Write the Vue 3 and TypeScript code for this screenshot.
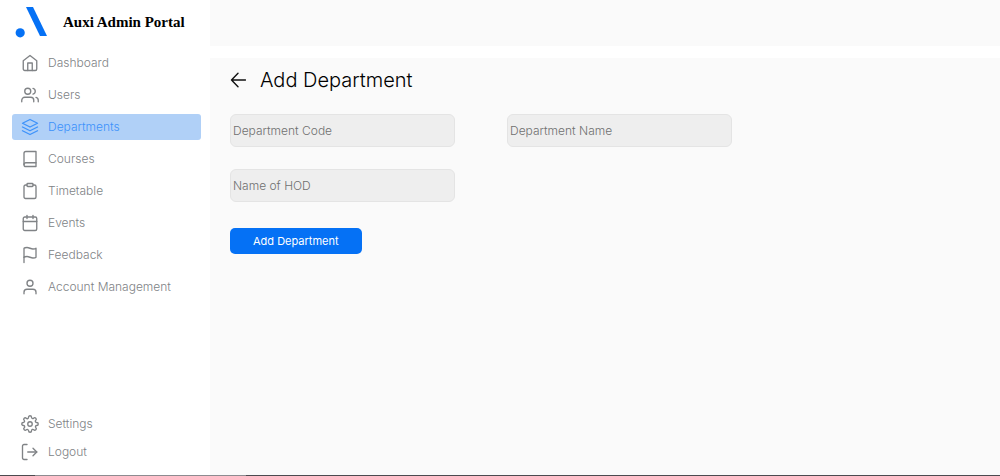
<script setup lang="ts">
import { ref } from 'vue'

interface NavItem {
  label: string
  paths: string[]
}

const mainItems: NavItem[] = [
  { label: 'Dashboard', paths: ['M3 9 12 2l9 7v11a2 2 0 0 1-2 2H5a2 2 0 0 1-2-2z', 'M9 22V12h6v10'] },
  {
    label: 'Users',
    paths: [
      'M17 21v-2a4 4 0 0 0-4-4H5a4 4 0 0 0-4 4v2',
      'M13 7a4 4 0 1 1-8 0 4 4 0 0 1 8 0z',
      'M23 21v-2a4 4 0 0 0-3-3.87',
      'M16 3.13a4 4 0 0 1 0 7.75',
    ],
  },
  { label: 'Departments', paths: ['M12 2 2 7l10 5 10-5z', 'm2 17 10 5 10-5', 'm2 12 10 5 10-5'] },
  {
    label: 'Courses',
    paths: ['M4 19.5A2.5 2.5 0 0 1 6.5 17H20', 'M6.5 2H20v20H6.5A2.5 2.5 0 0 1 4 19.5v-15A2.5 2.5 0 0 1 6.5 2z'],
  },
  {
    label: 'Timetable',
    paths: [
      'M16 4h2a2 2 0 0 1 2 2v14a2 2 0 0 1-2 2H6a2 2 0 0 1-2-2V6a2 2 0 0 1 2-2h2',
      'M9 2h6a1 1 0 0 1 1 1v2a1 1 0 0 1-1 1H9a1 1 0 0 1-1-1V3a1 1 0 0 1 1-1z',
    ],
  },
  { label: 'Events', paths: ['M5 4h14a2 2 0 0 1 2 2v14a2 2 0 0 1-2 2H5a2 2 0 0 1-2-2V6a2 2 0 0 1 2-2z', 'M16 2v4', 'M8 2v4', 'M3 10h18'] },
  { label: 'Feedback', paths: ['M4 15s1-1 4-1 5 2 8 2 4-1 4-1V3s-1 1-4 1-5-2-8-2-4 1-4 1z', 'M4 22v-7'] },
  { label: 'Account Management', paths: ['M20 21v-2a4 4 0 0 0-4-4H8a4 4 0 0 0-4 4v2', 'M16 7a4 4 0 1 1-8 0 4 4 0 0 1 8 0z'] },
]

const footItems: NavItem[] = [
  {
    label: 'Settings',
    paths: [
      'M15 12a3 3 0 1 1-6 0 3 3 0 0 1 6 0z',
      'M19.4 15a1.65 1.65 0 0 0 .33 1.82l.06.06a2 2 0 0 1-2.83 2.83l-.06-.06a1.65 1.65 0 0 0-2.8 1.18V21a2 2 0 0 1-4 0v-.09A1.65 1.65 0 0 0 9 19.4a1.65 1.65 0 0 0-1.82.33l-.06.06a2 2 0 0 1-2.83-2.83l.06-.06A1.65 1.65 0 0 0 3.17 14H3a2 2 0 0 1 0-4h.09A1.65 1.65 0 0 0 4.6 9a1.65 1.65 0 0 0-.33-1.82l-.06-.06a2 2 0 0 1 2.83-2.83l.06.06A1.65 1.65 0 0 0 10 3.17V3a2 2 0 0 1 4 0v.09a1.65 1.65 0 0 0 2.82 1.18l.06-.06a2 2 0 0 1 2.83 2.83l-.06.06A1.65 1.65 0 0 0 20.91 10H21a2 2 0 0 1 0 4h-.09a1.65 1.65 0 0 0-1.51 1z',
    ],
  },
  { label: 'Logout', paths: ['M8 22H4a2 2 0 0 1-2-2V4a2 2 0 0 1 2-2h4', 'm16 17 5-5-5-5', 'M21 12H9'] },
]

const active = ref('Departments')
const code = ref('')
const name = ref('')
const hod = ref('')
</script>

<template>
  <div class="portal">
    <aside class="sidebar">
      <div class="brand">
        <svg class="logo" viewBox="0 0 32 32" aria-hidden="true">
          <path d="M10 1H17L31 30H24z" />
          <circle cx="4.2" cy="26.8" r="4.6" />
        </svg>
        <span class="brand-name">Auxi Admin Portal</span>
      </div>
      <nav class="nav" aria-label="Main">
        <a
          v-for="item in mainItems"
          :key="item.label"
          href="#"
          class="nav-link"
          :class="{ active: item.label === active }"
          @click.prevent="active = item.label"
        >
          <svg class="icon" viewBox="0 0 24 24" aria-hidden="true">
            <path v-for="d in item.paths" :key="d" :d="d" />
          </svg>
          <span>{{ item.label }}</span>
        </a>
      </nav>
      <nav class="nav nav-foot" aria-label="Account">
        <a v-for="item in footItems" :key="item.label" href="#" class="nav-link" @click.prevent>
          <svg class="icon" viewBox="0 0 24 24" aria-hidden="true">
            <path v-for="d in item.paths" :key="d" :d="d" />
          </svg>
          <span>{{ item.label }}</span>
        </a>
      </nav>
    </aside>
    <div class="content">
      <header class="topbar"></header>
      <main class="panel">
        <div class="heading">
          <a href="#" class="back" aria-label="Back" @click.prevent>
            <svg viewBox="0 0 16 16" aria-hidden="true"><path d="M15.5 8H1.500M8 1.200 1.500 8 8 14.800" /></svg>
          </a>
          <h1>Add Department</h1>
        </div>
        <form @submit.prevent>
          <div class="fields">
            <input v-model="code" type="text" placeholder="Department Code" aria-label="Department Code" />
            <input v-model="name" type="text" placeholder="Department Name" aria-label="Department Name" />
            <input v-model="hod" type="text" placeholder="Name of HOD" aria-label="Name of HOD" />
          </div>
          <button type="submit" class="submit">Add Department</button>
        </form>
      </main>
    </div>
    <div class="edge"><span></span></div>
  </div>
</template>

<style>
body {
  margin: 0;
  background: #fff;
}
</style>

<style scoped>
.portal {
  display: grid;
  grid-template-columns: 210px 1fr;
  grid-template-rows: 1fr 1px;
  min-height: 100vh;
  font-family: Inter, 'Liberation Sans', sans-serif;
}

.sidebar {
  display: flex;
  flex-direction: column;
  box-sizing: border-box;
  padding: 6px 9px 10px 12px;
}

.brand {
  display: flex;
  align-items: center;
  gap: 15px;
  height: 32px;
  padding-left: 4px;
}

.logo {
  width: 32px;
  height: 32px;
  overflow: visible;
  fill: #0571f5;
}

.brand-name {
  font: bold 15px/20px 'Liberation Serif', serif;
  color: #000;
}

.nav {
  display: flex;
  flex-direction: column;
  gap: 6px;
  margin-top: 12px;
}

.nav-foot {
  gap: 2px;
  margin-top: auto;
}

.nav-link {
  display: flex;
  align-items: center;
  gap: 9px;
  height: 26px;
  padding-left: 9px;
  border-radius: 3px;
  color: #808386;
  font-size: 12px;
  font-weight: 350;
  line-height: 16px;
  text-decoration: none;
}

.nav-link.active {
  background: #b0d0f7;
  color: #3d92fb;
}

.icon {
  width: 18px;
  height: 18px;
  fill: none;
  stroke: currentColor;
  stroke-width: 1.8;
  stroke-linecap: round;
  stroke-linejoin: round;
}

.content {
  display: flex;
  flex-direction: column;
  gap: 12px;
}

.topbar {
  height: 46px;
  background: #fafafa;
}

.panel {
  flex: 1;
  padding: 8px 20px;
  background: #fafafa;
}

.heading {
  display: flex;
  align-items: center;
  gap: 14px;
  height: 28px;
}

.back {
  display: flex;
  color: #111;
}

.back svg {
  width: 16px;
  height: 16px;
  fill: none;
  stroke: currentColor;
  stroke-width: 1.4;
  stroke-linecap: round;
  stroke-linejoin: round;
}

h1 {
  margin: 0;
  font-size: 20px;
  line-height: 28px;
  font-weight: 350;
  color: #000;
}

.fields {
  display: grid;
  grid-template-columns: repeat(auto-fill, 225px);
  gap: 22px 52px;
  max-width: 502px;
  margin-top: 20px;
}

input {
  box-sizing: border-box;
  width: 100%;
  height: 33px;
  padding: 0 2px;
  border: 1px solid #e4e4e4;
  border-radius: 6px;
  background: #eee;
  color: #222;
  font: 350 12px/16px Inter, 'Liberation Sans', sans-serif;
}

input::placeholder {
  color: #707070;
  opacity: 1;
}

.submit {
  height: 26px;
  margin-top: 26px;
  padding: 0 23px;
  border: 0;
  border-radius: 5px;
  background: #0571f5;
  color: #fff;
  font: 11px/16px Inter, 'Liberation Sans', sans-serif;
}

.edge {
  grid-column: 1 / -1;
  padding-left: 35px;
  background: #4c4a4f;
}

.edge span {
  display: block;
  width: 211px;
  height: 1px;
  background: #8d8b90;
}
</style>
